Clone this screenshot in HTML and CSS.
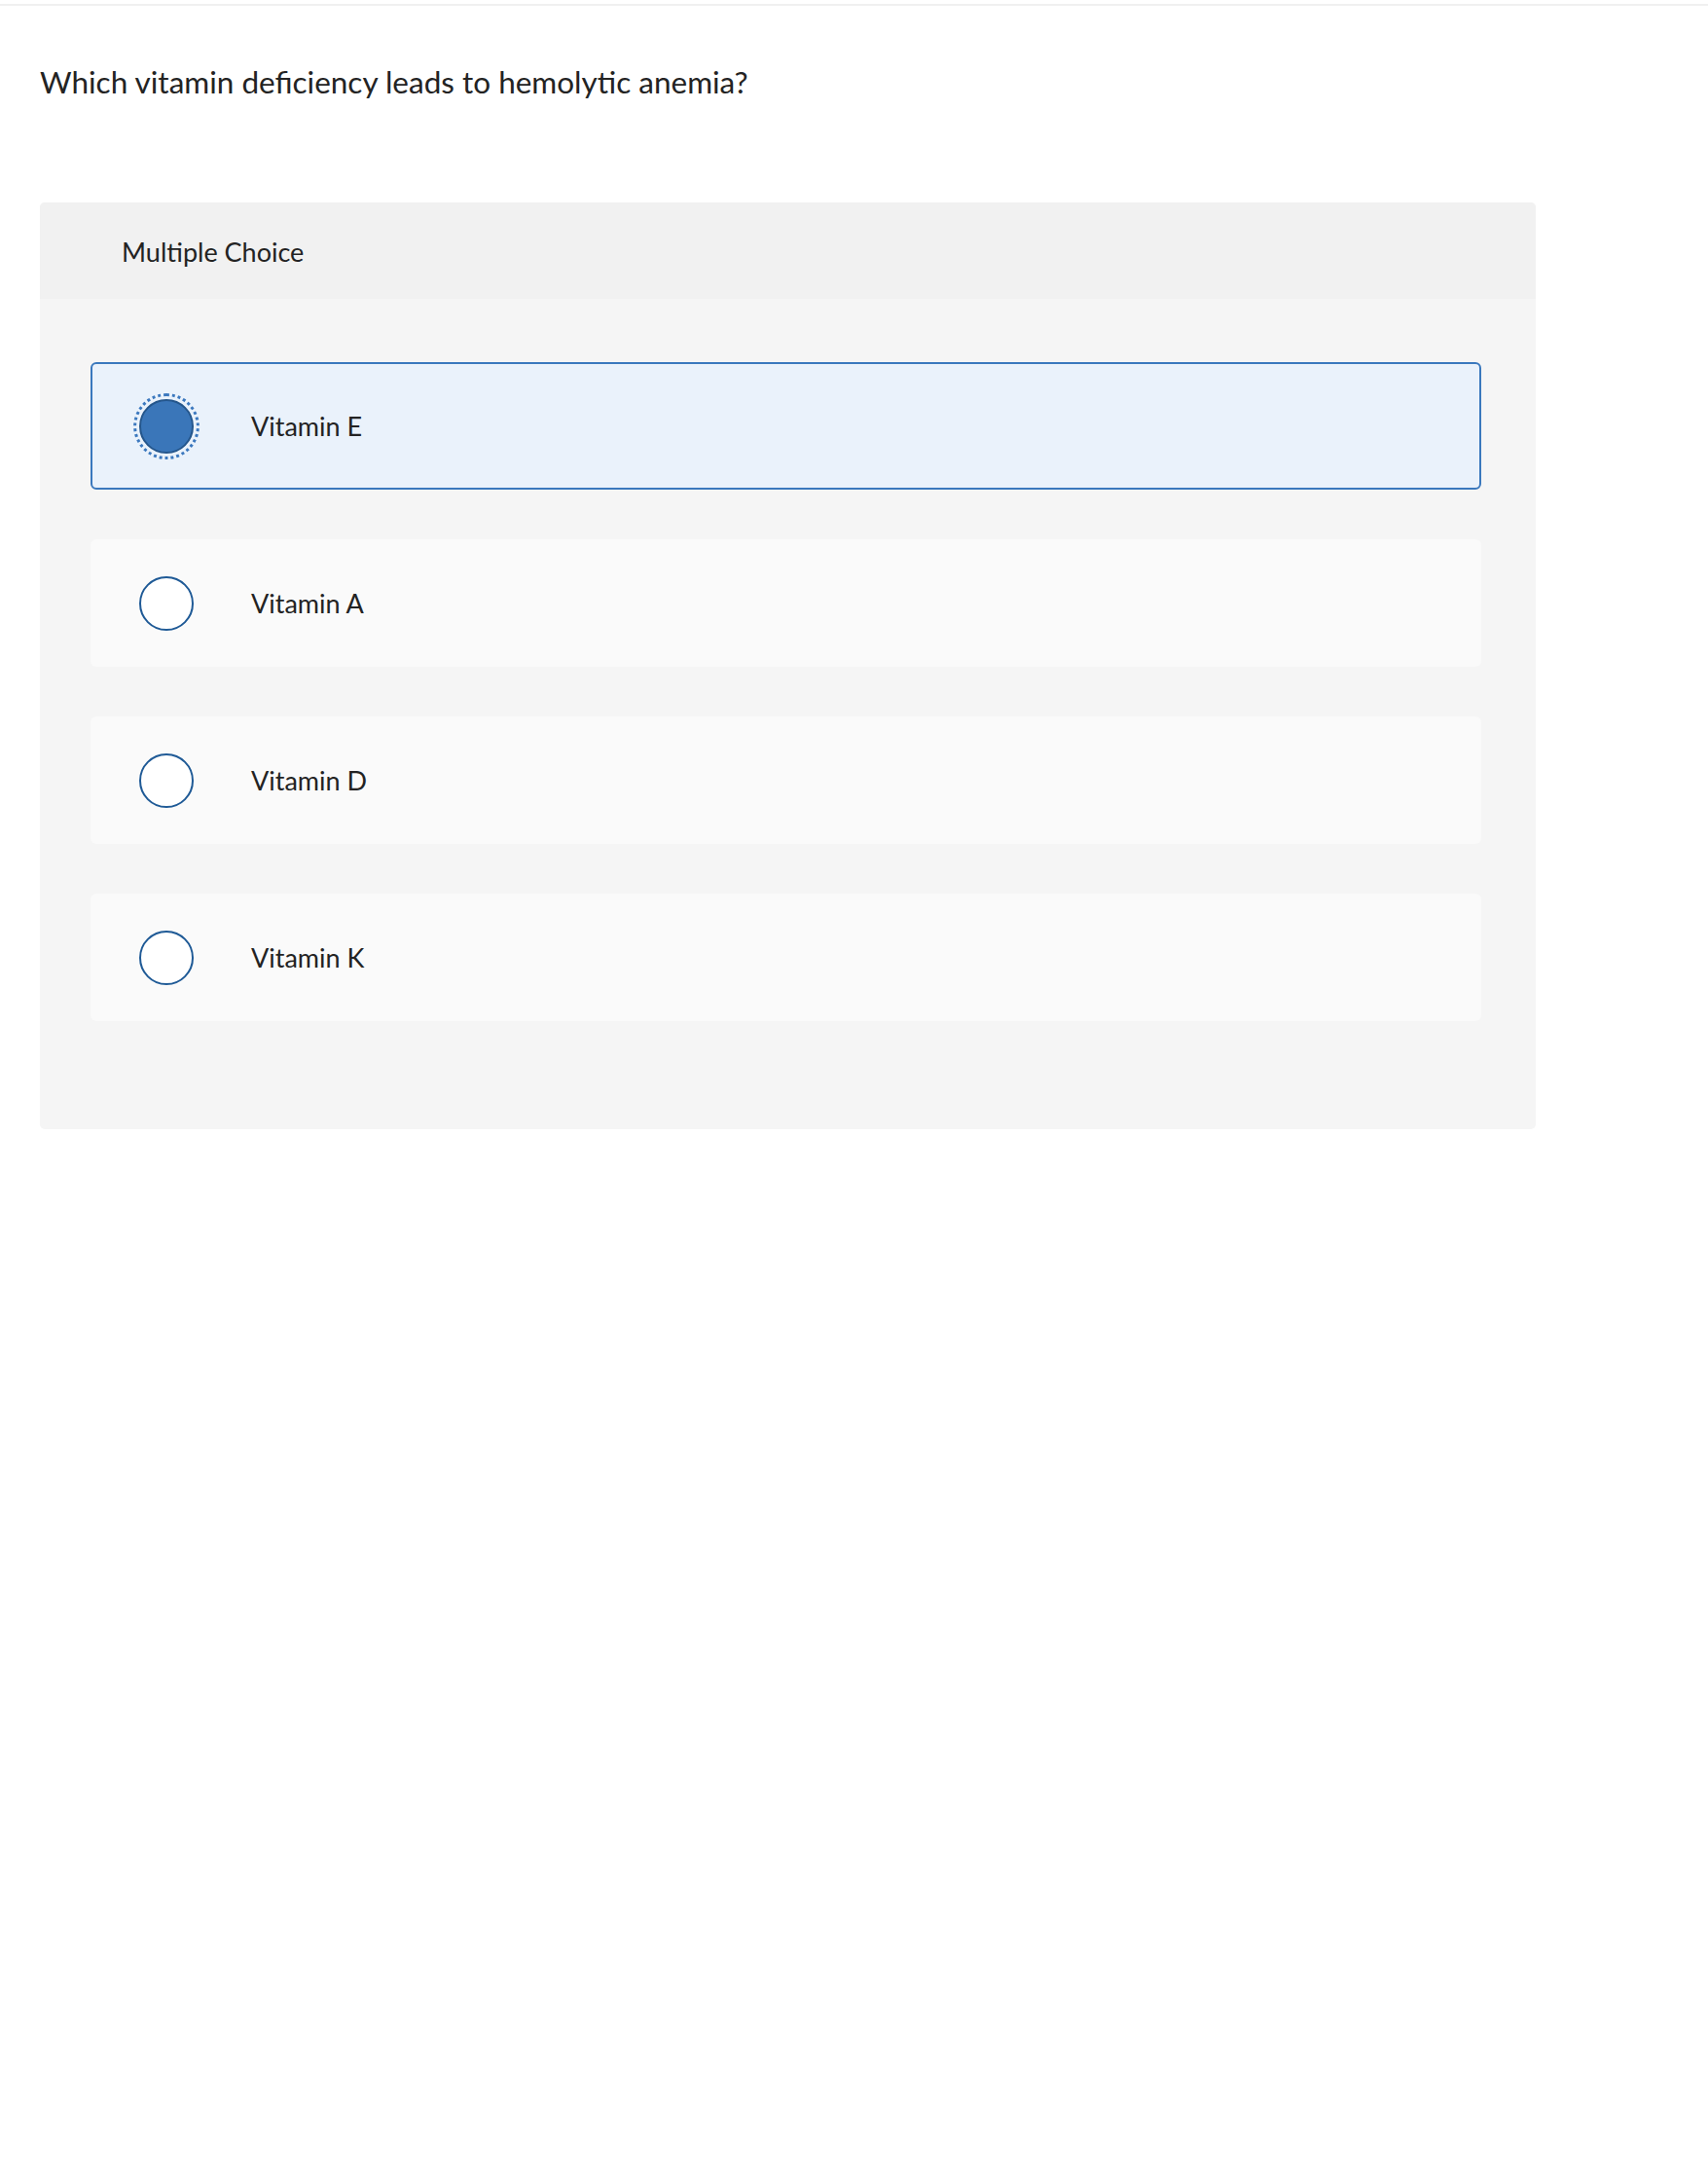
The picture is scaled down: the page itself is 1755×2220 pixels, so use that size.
FILE: index.html
```html
<!DOCTYPE html>
<html lang="en">
<head>
<meta charset="utf-8">
<title>Multiple Choice</title>
<link rel="stylesheet" href="styles.css">
</head>
<body>
<div class="topbar"></div>
<main class="page">
  <h1 class="question">Which vitamin deficiency leads to hemolytic anemia?</h1>
  <section class="card">
    <header class="card-head">Multiple Choice</header>
    <div class="card-body">
      <label class="option selected">
        <span class="radio checked"></span>
        <span class="option-text">Vitamin E</span>
      </label>
      <label class="option">
        <span class="radio"></span>
        <span class="option-text">Vitamin A</span>
      </label>
      <label class="option">
        <span class="radio"></span>
        <span class="option-text">Vitamin D</span>
      </label>
      <label class="option">
        <span class="radio"></span>
        <span class="option-text">Vitamin K</span>
      </label>
    </div>
  </section>
</main>
</body>
</html>
```

FILE: styles.css
```css
* { box-sizing: border-box; }

html, body {
  margin: 0;
  padding: 0;
  background: #ffffff;
}

body {
  font-family: Lato, "Liberation Sans", Arial, sans-serif;
  color: #222222;
}

.topbar {
  height: 6px;
  border-bottom: 2px solid #f0f0f0;
}

.page {
  padding-left: 41px;
  width: 1578px;
}

.question {
  margin: 59px 0 105px 0;
  font-size: 31.5px;
  line-height: 38px;
  font-weight: 400;
  color: #232323;
}

.card {
  background: #f5f5f5;
  border-radius: 5px;
  overflow: hidden;
  width: 1537px;
}

.card-head {
  height: 99px;
  background: #f1f1f1;
  display: flex;
  align-items: center;
  padding: 2px 0 0 84px;
  font-size: 27px;
  color: #232323;
}

.card-body {
  padding: 65px 56px 111px 52px;
  display: flex;
  flex-direction: column;
  gap: 51px;
}

.option {
  height: 131px;
  border: 2px solid transparent;
  border-radius: 6px;
  background: #fafafa;
  display: flex;
  align-items: center;
  padding-left: 48px;
}

.option.selected {
  background: #eaf2fb;
  border-color: #3a78bd;
}

.radio {
  width: 56px;
  height: 56px;
  flex: 0 0 56px;
  border-radius: 50%;
  border: 2px solid #1f5a96;
  background: #ffffff;
}

.radio.checked {
  background: #3a76b9;
  border-color: #24568c;
  outline: 3px dotted #3b78be;
  outline-offset: 3px;
}

.option-text {
  margin-left: 59px;
  font-size: 27px;
  color: #232323;
}
```
